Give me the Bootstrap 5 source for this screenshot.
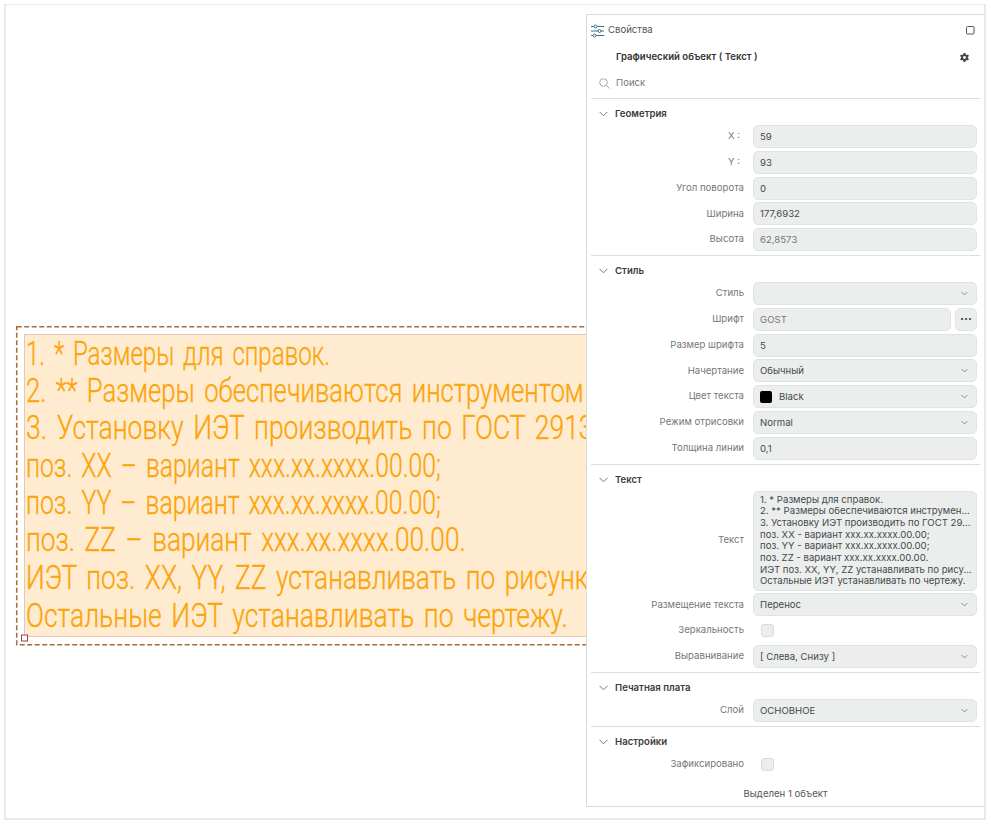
<!DOCTYPE html>
<html lang="ru">
<head>
<meta charset="utf-8">
<title>Свойства</title>
<link href="https://cdn.jsdelivr.net/npm/bootstrap@5.3.0/dist/css/bootstrap.min.css" rel="stylesheet">
<style>
html,body{height:100%;margin:0;background:#fff;overflow:hidden}
body{font-family:Inter,"Liberation Sans",sans-serif;font-size:9.6px;color:#444}
.cad-canvas{position:absolute;left:4px;top:4px;width:982px;height:816px;border:2px solid #e8e9e9;border-top-width:1.5px;background:#fff;overflow:hidden}
.cad-draw{position:absolute;left:0;top:0;width:700px;height:660px}
.cad-draw text{font-family:Roboto,"Liberation Sans",sans-serif;font-weight:300;fill:#fba40c;stroke:#fba40c;stroke-width:.35px;font-size:34px;word-spacing:.12em}
.prop-panel{position:absolute;left:580px;top:9px;width:399px;height:793px;background:#fff;border:1.5px solid #d3dfdd;display:flex;flex-direction:column}
.prop-head{height:29px;padding:2px 9px 0 4px}
.prop-head span{color:#555}
.prop-obj{height:23px;padding:4px 14px 0 29px}
.prop-obj b{font-weight:600;color:#333}
.prop-search{height:32px;margin:0 4px;padding:2px 8px 0;border-bottom:1px solid #d6e0de;color:#777;gap:6px}
.prop-sec{margin:0 4px;padding:8px 3px 4px 8px;border-bottom:1px solid #d6e0de}
.prop-sec.last{border-bottom:0}
.prop-title{height:14px;font-weight:600;color:#3b3b3b;gap:7px;margin-bottom:4px;line-height:14px}
.prop-rows{display:flex;flex-direction:column;gap:2.75px}
.prop-row{display:flex;align-items:center;gap:9px;min-height:23px}
.prop-label{width:145px;flex:none;text-align:right;color:#747878}
.prop-ctl.form-control,.prop-ctl.form-select{flex:1;min-width:0;height:23px;min-height:23px;padding:0 6px;font-size:9.6px;line-height:21px;color:#454a4c;background-color:#ebeeed;border:1px solid #dde4e2;border-radius:5px;box-shadow:none}
.prop-ctl.form-select{background-image:url("data:image/svg+xml,%3csvg xmlns='http://www.w3.org/2000/svg' viewBox='0 0 16 16'%3e%3cpath fill='none' stroke='%23666' stroke-width='1.3' d='M3 5.5l5 5 5-5'/%3e%3c/svg%3e");background-size:9px 9px;background-position:right 7px center;padding-right:20px}
.prop-ctl.is-off{color:#777}
.prop-area.form-control{height:100px;padding:2px 6px;flex:1;font-size:9.6px;line-height:11.7px;color:#454a4c;background:#ebeeed;border:1px solid #dde4e2;border-radius:5px;white-space:nowrap;overflow:hidden}
.prop-dots.btn{width:22px;height:23px;padding:0;background:#ebeeed;border:1px solid #dde4e2;border-radius:5px;color:#444;font-size:12px;line-height:18px;font-weight:700;flex:none;letter-spacing:0}
.prop-swatch{display:inline-block;width:12px;height:12px;background:#000;border-radius:2px;margin-right:7px;vertical-align:-2.5px}
.prop-check.form-check-input{width:13px;height:13px;margin:0 0 0 8px;background-color:#ebeeed;border:1px solid #d6dedc;border-radius:3px}
.prop-foot{color:#555;text-align:center;margin-top:auto;padding-bottom:5px}
</style>
</head>
<body>
<div class="cad-canvas">
  <svg class="cad-draw" viewBox="0 0 700 660" xmlns="http://www.w3.org/2000/svg" role="img" aria-label="Текст">
    <rect x="10.7" y="321.7" width="640" height="318" fill="none" stroke="#a26c3c" stroke-width="1.5" stroke-dasharray="5 2.5"/>
    <rect x="18.5" y="329.5" width="630" height="302" fill="#ffecd0" stroke="#e6c8b2"/>
    <text data-w="304" data-y="360">1. * Размеры для справок.</text>
    <text data-w="558" data-y="397">2. ** Размеры обеспечиваются инструментом</text>
    <text data-w="590" data-y="434">3. Установку ИЭТ производить по ГОСТ 29137-</text>
    <text data-w="415" data-y="472">поз. XX – вариант xxx.xx.xxxx.00.00;</text>
    <text data-w="415" data-y="509">поз. YY – вариант xxx.xx.xxxx.00.00;</text>
    <text data-w="440" data-y="546">поз. ZZ – вариант xxx.xx.xxxx.00.00.</text>
    <text data-w="575" data-y="584">ИЭТ поз. XX, YY, ZZ устанавливать по рисунку</text>
    <text data-w="542" data-y="622">Остальные ИЭТ устанавливать по чертежу.</text>
    <rect x="15.5" y="630" width="6" height="6" fill="#fff" stroke="#9c3d4d"/>
  </svg>

  <aside class="prop-panel">
    <div class="prop-head d-flex align-items-center gap-1">
      <svg width="13" height="14" viewBox="0 0 13 14" fill="none" stroke="#3f6c8c" stroke-width="1"><path d="M0 2.5h3M6 2.5h7M0 7h7M10 7h3M0 11.5h2M5 11.5h8"/><circle cx="4.5" cy="2.5" r="1.5"/><circle cx="8.5" cy="7" r="1.5"/><circle cx="3.5" cy="11.5" r="1.5"/></svg>
      <span>Свойства</span>
      <svg class="ms-auto" width="9" height="9" viewBox="0 0 9 9" fill="none" stroke="#555" stroke-width="1"><rect x=".5" y=".5" width="7.5" height="7.5" rx="1"/></svg>
    </div>
    <div class="prop-obj d-flex align-items-center justify-content-between">
      <b>Графический объект ( Текст )</b>
      <svg width="11" height="11" viewBox="0 0 16 16" fill="#444"><path d="M9.4 0H6.6l-.4 2.2-1.2.7-2.1-.8L1.5 4.5l1.7 1.4v1.4l-1.7 1.4 1.4 2.4 2.1-.8 1.2.7.4 2.2h2.8l.4-2.2 1.2-.7 2.1.8 1.4-2.4-1.7-1.4V5.9l1.7-1.4-1.4-2.4-2.1.8-1.2-.7zM8 4.5a2.1 2.1 0 1 1 0 4.2 2.1 2.1 0 0 1 0-4.2z" transform="translate(0 1.4)" fill-rule="evenodd"/></svg>
    </div>
    <div class="prop-search d-flex align-items-center">
      <svg width="11" height="11" viewBox="0 0 11 11" fill="none" stroke="#aaa" stroke-width="1"><circle cx="4.5" cy="4.5" r="3.8"/><path d="M7.3 7.3l3.2 3.2"/></svg>
      <span>Поиск</span>
    </div>

    <section class="prop-sec">
      <div class="prop-title d-flex align-items-center"><svg width="9" height="6" viewBox="0 0 9 6" fill="none" stroke="#777"><path d="M.5.8l4 4 4-4"/></svg><span>Геометрия</span></div>
      <div class="prop-rows">
        <div class="prop-row"><span class="prop-label pe-1">X :</span><input class="prop-ctl form-control" value="59"></div>
        <div class="prop-row"><span class="prop-label pe-1">Y :</span><input class="prop-ctl form-control" value="93"></div>
        <div class="prop-row"><span class="prop-label">Угол поворота</span><input class="prop-ctl form-control" value="0"></div>
        <div class="prop-row"><span class="prop-label">Ширина</span><input class="prop-ctl form-control" value="177,6932"></div>
        <div class="prop-row"><span class="prop-label">Высота</span><input class="prop-ctl form-control is-off" value="62,8573"></div>
      </div>
    </section>

    <section class="prop-sec">
      <div class="prop-title d-flex align-items-center"><svg width="9" height="6" viewBox="0 0 9 6" fill="none" stroke="#777"><path d="M.5.8l4 4 4-4"/></svg><span>Стиль</span></div>
      <div class="prop-rows">
        <div class="prop-row"><span class="prop-label">Стиль</span><div class="prop-ctl form-select"></div></div>
        <div class="prop-row"><span class="prop-label">Шрифт</span><div class="d-flex flex-grow-1 gap-1"><input class="prop-ctl form-control is-off" value="GOST"><button class="prop-dots btn" type="button">···</button></div></div>
        <div class="prop-row"><span class="prop-label">Размер шрифта</span><input class="prop-ctl form-control" value="5"></div>
        <div class="prop-row"><span class="prop-label">Начертание</span><div class="prop-ctl form-select">Обычный</div></div>
        <div class="prop-row"><span class="prop-label">Цвет текста</span><div class="prop-ctl form-select"><span class="prop-swatch"></span>Black</div></div>
        <div class="prop-row"><span class="prop-label">Режим отрисовки</span><div class="prop-ctl form-select">Normal</div></div>
        <div class="prop-row"><span class="prop-label">Толщина линии</span><input class="prop-ctl form-control" value="0,1"></div>
      </div>
    </section>

    <section class="prop-sec">
      <div class="prop-title d-flex align-items-center"><svg width="9" height="6" viewBox="0 0 9 6" fill="none" stroke="#777"><path d="M.5.8l4 4 4-4"/></svg><span>Текст</span></div>
      <div class="prop-rows">
        <div class="prop-row"><span class="prop-label">Текст</span><div class="prop-area form-control">1. * Размеры для справок.<br>2. ** Размеры обеспечиваются инструмен...<br>3. Установку ИЭТ производить по ГОСТ 29...<br>поз. XX - вариант xxx.xx.xxxx.00.00;<br>поз. YY - вариант xxx.xx.xxxx.00.00;<br>поз. ZZ - вариант xxx.xx.xxxx.00.00.<br>ИЭТ поз. XX, YY, ZZ устанавливать по рису...<br>Остальные ИЭТ устанавливать по чертежу.</div></div>
        <div class="prop-row"><span class="prop-label">Размещение текста</span><div class="prop-ctl form-select">Перенос</div></div>
        <div class="prop-row"><span class="prop-label">Зеркальность</span><input class="prop-check form-check-input" type="checkbox"></div>
        <div class="prop-row"><span class="prop-label">Выравнивание</span><div class="prop-ctl form-select">[ Слева, Снизу ]</div></div>
      </div>
    </section>

    <section class="prop-sec">
      <div class="prop-title d-flex align-items-center"><svg width="9" height="6" viewBox="0 0 9 6" fill="none" stroke="#777"><path d="M.5.8l4 4 4-4"/></svg><span>Печатная плата</span></div>
      <div class="prop-rows">
        <div class="prop-row"><span class="prop-label">Слой</span><div class="prop-ctl form-select">ОСНОВНОЕ</div></div>
      </div>
    </section>

    <section class="prop-sec last">
      <div class="prop-title d-flex align-items-center"><svg width="9" height="6" viewBox="0 0 9 6" fill="none" stroke="#777"><path d="M.5.8l4 4 4-4"/></svg><span>Настройки</span></div>
      <div class="prop-rows">
        <div class="prop-row"><span class="prop-label">Зафиксировано</span><input class="prop-check form-check-input" type="checkbox"></div>
      </div>
    </section>
    <div class="prop-foot">Выделен 1 объект</div>
  </aside>
</div>
<script src="https://cdn.jsdelivr.net/npm/bootstrap@5.3.0/dist/js/bootstrap.bundle.min.js"></script>
<script>
document.querySelectorAll('.cad-draw text').forEach(function(t){
  var k=t.dataset.w/t.getComputedTextLength();
  t.setAttribute('transform','translate(20 '+t.dataset.y+') scale('+k+' 1)');
});
</script>
</body>
</html>
